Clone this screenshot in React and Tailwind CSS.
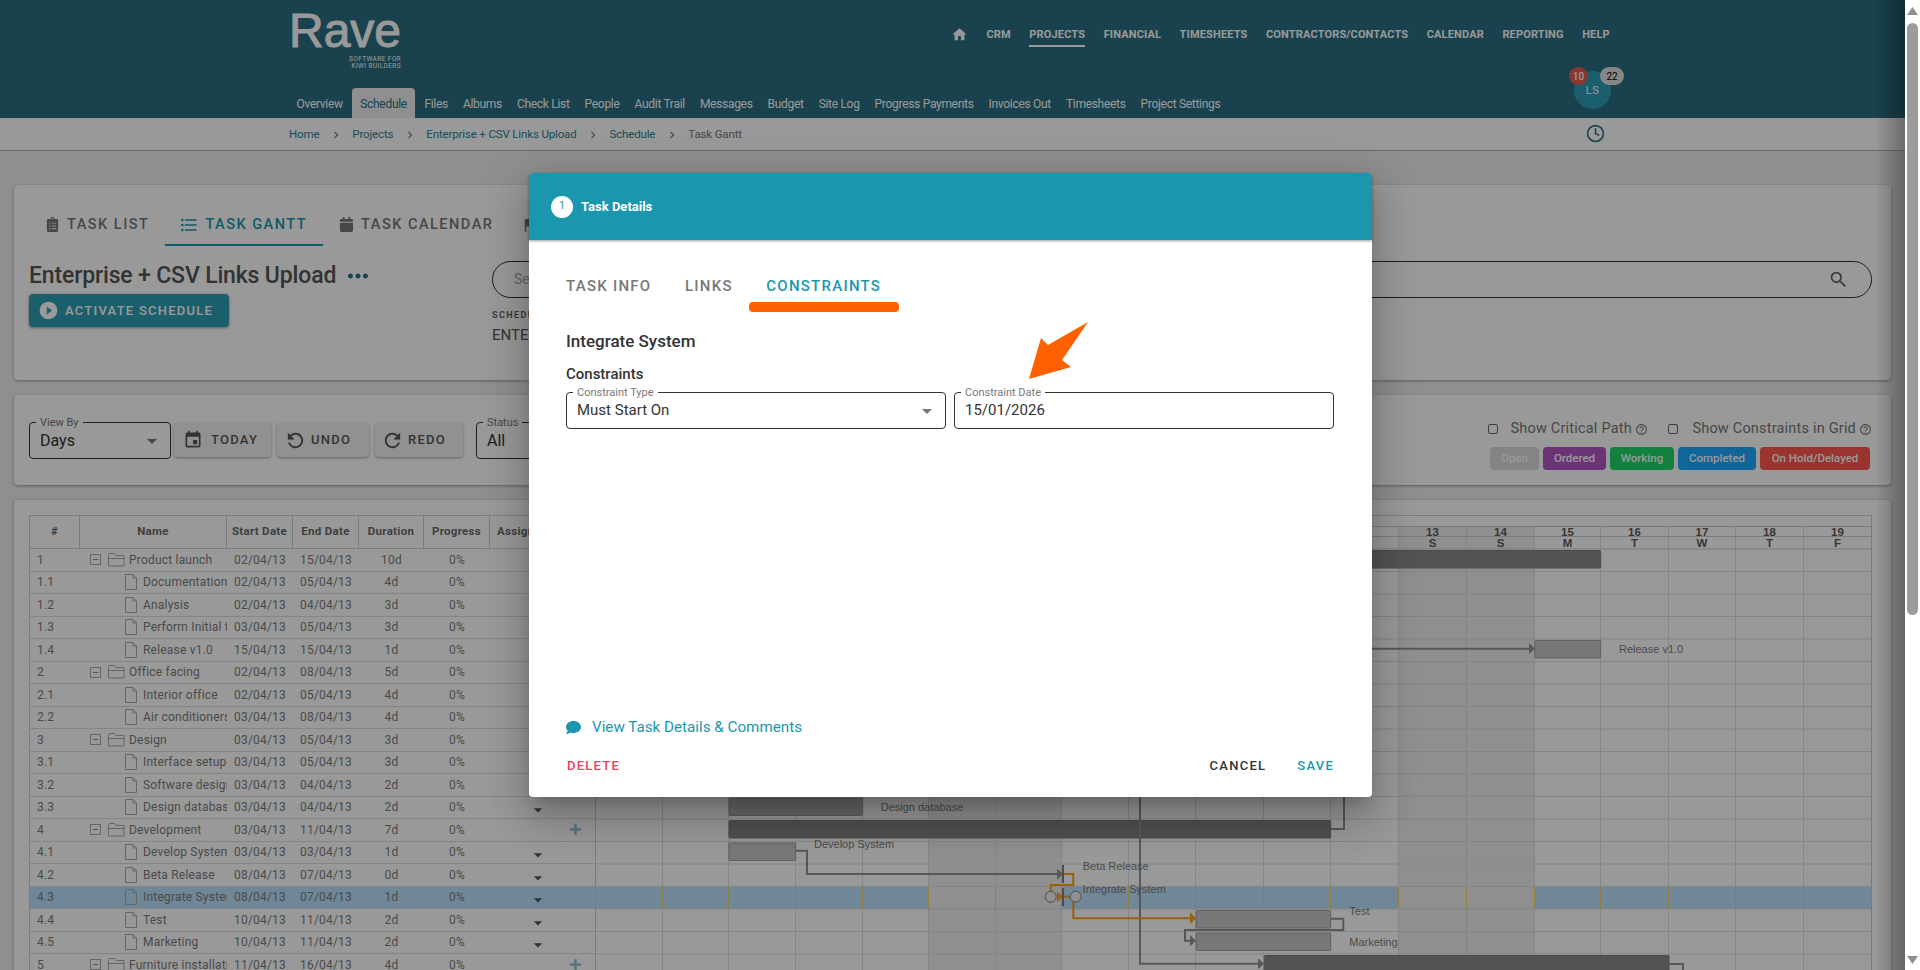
import { MdHome, MdFormatListBulleted, MdEvent, MdPlayCircleFilled, MdSearch, MdHelpOutline, MdMoreHoriz, MdFlag, MdArrowDropDown, MdRefresh, MdChevronRight } from "react-icons/md";
import { FaClipboardList, FaCalendar, FaComment, FaPlus } from "react-icons/fa";
import { FiClock } from "react-icons/fi";

const topNav = ["CRM", "PROJECTS", "FINANCIAL", "TIMESHEETS", "CONTRACTORS/CONTACTS", "CALENDAR", "REPORTING", "HELP"];
const subNav = ["Overview", "Schedule", "Files", "Albums", "Check List", "People", "Audit Trail", "Messages", "Budget", "Site Log", "Progress Payments", "Invoices Out", "Timesheets", "Project Settings"];

const rows = [
  ["1", "Product launch", "02/04/13", "15/04/13", "10d", true],
  ["1.1", "Documentation creation", "02/04/13", "05/04/13", "4d"],
  ["1.2", "Analysis", "02/04/13", "04/04/13", "3d"],
  ["1.3", "Perform Initial testing", "03/04/13", "05/04/13", "3d"],
  ["1.4", "Release v1.0", "15/04/13", "15/04/13", "1d"],
  ["2", "Office facing", "02/04/13", "08/04/13", "5d", true],
  ["2.1", "Interior office", "02/04/13", "05/04/13", "4d"],
  ["2.2", "Air conditioners check", "03/04/13", "08/04/13", "4d"],
  ["3", "Design", "03/04/13", "05/04/13", "3d", true],
  ["3.1", "Interface setup", "03/04/13", "05/04/13", "3d"],
  ["3.2", "Software design", "03/04/13", "04/04/13", "2d"],
  ["3.3", "Design database", "03/04/13", "04/04/13", "2d"],
  ["4", "Development", "03/04/13", "11/04/13", "7d", true],
  ["4.1", "Develop System", "03/04/13", "03/04/13", "1d"],
  ["4.2", "Beta Release", "08/04/13", "07/04/13", "0d"],
  ["4.3", "Integrate System", "08/04/13", "07/04/13", "1d"],
  ["4.4", "Test", "10/04/13", "11/04/13", "2d"],
  ["4.5", "Marketing", "10/04/13", "11/04/13", "2d"],
  ["5", "Furniture installation", "11/04/13", "16/04/13", "4d", true],
];

const HL = 15;
const ROW = 22.5;
const days = ["M", "T", "W", "T", "F", "S", "S"];
// column edges of the timeline, they are not quite even
const edges = [-0.5, 66.5, 132.5, 199.5, 266.5, 332.5, 399.5, 465.5, 532.5, 599.5, 667.5, 734.5, 802.5, 870.5, 938.5, 1004.5, 1072.5, 1139.5, 1207.5, 1275.5];

function GanttChart() {
  const top = 33;
  const rowY = (i) => top + i * ROW;
  const bar = (i, a, b, fill, stroke) => (
    <rect x={a} y={rowY(i) + 1.5} width={b - a} height={17.5} rx="1" fill={fill} stroke={stroke} />
  );
  const link = "#939393";
  const orange = "#ffa01a";
  return (
    <svg width="1277" height="460" className="block font-['Liberation_Sans',Arial,sans-serif]">
      <rect x="0" y={rowY(HL)} width="1277" height={ROW} fill="#b9e1fa" />
      <rect x={edges[5]} y="10.500" width={edges[7] - edges[5]} height="450" fill="#eeeeee" />
      <rect x={edges[12]} y="10.500" width={edges[14] - edges[12]} height="450" fill="#eeeeee" />
      {edges.map((x) => (
        <line key={x} x1={x} x2={x} y1="10.500" y2="460" stroke="#dedede" />
      ))}
      {edges.map((x) => (
        <line key={x} x1={x} x2={x} y1={rowY(HL)} y2={rowY(HL + 1)} stroke="#efd766" />
      ))}
      {rows.map((r, i) => (
        <line key={r[0]} x1="0" x2="1276" y1={rowY(i + 1)} y2={rowY(i + 1)} stroke="#dedede" />
      ))}
      <line x1="0" x2="1276" y1="10.500" y2="10.500" stroke="#cecece" />
      <line x1="0" x2="1276" y1="20.500" y2="20.500" stroke="#cecece" />
      <line x1="0" x2="1276" y1="33" y2="33" stroke="#cecece" />
      {edges.slice(0, 19).map((x, c) => (
        <g key={x} fontSize="11.5" fontWeight="700" fill="#5c5c5c" textAnchor="middle">
          <text x={(x + edges[c + 1]) / 2} y="20">{c + 1}</text>
          <text x={(x + edges[c + 1]) / 2} y="30.500">{days[c % 7]}</text>
        </g>
      ))}
      <line x1="1275.5" x2="1275.5" y1="0" y2="460" stroke="#cecece" />

      {/* bars */}
      {bar(0, 500, 1004.7, "#8a8a8a", "#808080")}
      {bar(4, 939, 1004.7, "#c8c8c8", "#a0a0a0")}
      {bar(11, 133, 266.7, "#adadad", "#9a9a9a")}
      {bar(12, 133, 734.7, "#868686", "#808080")}
      {bar(13, 133, 199.7, "#c8c8c8", "#a0a0a0")}
      {bar(16, 600.3, 734.7, "#c8c8c8", "#a0a0a0")}
      {bar(17, 600.3, 734.7, "#c8c8c8", "#a0a0a0")}
      {bar(18, 668.3, 1073, "#8a8a8a", "#808080")}

      {/* links */}
      <g fill="none" stroke={link} strokeWidth="2">
        <path d="M500 132.700H933" />
        <path d="M200 334.700H211V358H461" />
        <path d="M544 230V447.700H662" />
        <path d="M734.700 313H748V270" />
        <path d="M734.700 402.700H747.300V414H589V424.700H595" />
        <path d="M1073 448H1087V460" />
      </g>
      <g fill={link}>
        <path d="M939 132.700l-6 -5.500v11z" />
        <path d="M467 358l-6 -5.500v11z" />
        <path d="M668 447.700l-6 -5.500v11z" />
        <path d="M600 424.700l-6 -5.500v11z" />
      </g>
      <g fill="none" stroke={orange} strokeWidth="2">
        <path d="M467 358H477.300V369H454.700V375" />
        <path d="M467 380.700H474" />
        <path d="M477.300 386V402.300H594" />
      </g>
      <g fill={orange}>
        <path d="M467 380.700l-6 -5.500v11z" />
        <path d="M600 402.300l-6 -6v12z" />
      </g>
      <path d="M467 349V367M467 372V390" stroke="#808080" strokeWidth="2" />
      <circle cx="454.700" cy="380.700" r="5.500" fill="#f0f0f0" stroke="#808080" />
      <circle cx="479.700" cy="380.700" r="5.500" fill="#f0f0f0" stroke="#808080" />

      <g fontSize="11" fill="#7e7e7e">
        <text x="1023" y="136.700">Release v1.0</text>
        <text x="284.700" y="294.700">Design database</text>
        <text x="218" y="331.700">Develop System</text>
        <text x="486.700" y="353.700">Beta Release</text>
        <text x="486.700" y="376.700">Integrate System</text>
        <text x="753.300" y="398.700">Test</text>
        <text x="753.300" y="429.700">Marketing</text>
      </g>
    </svg>
  );
}

function OutlineField({ label, value, caret, valueClass = "text-[15px]", className }) {
  return (
    <div className={`relative h-[37px] border border-[#333] rounded flex items-center px-[10px] bg-white ${className}`}>
      <span className="absolute -top-[5px] left-[6px] bg-white px-[4px] text-[11px] leading-[10px] text-[#777]">{label}</span>
      <span className={`${valueClass} text-[#333]`}>{value}</span>
      {caret && <MdArrowDropDown size={24} className="ml-auto -mr-[4px] text-[#777]" />}
    </div>
  );
}

function GreyButton({ icon, label, className }) {
  return (
    <button className={`h-[34px] bg-[#f2f2f2] rounded shadow-[0_1px_3px_rgba(0,0,0,0.35)] flex items-center text-[13px] font-medium tracking-[1.25px] text-[#555] ${className}`}>
      {icon}
      {label}
    </button>
  );
}

function TreeRow({ row, index }) {
  const [id, name, start, end, dur, group] = row;
  return (
    <div className={`flex h-[22.5px] items-center border-b border-[#dedede] text-[12px] tracking-[0.2px] text-[#7c7c7c] ${index === HL ? "bg-[#b9e1fa]" : ""}`}>
      <div className="w-[50px] pl-[7px] shrink-0">{id}</div>
      <div className="w-[147px] shrink-0 flex items-center overflow-hidden whitespace-nowrap">
        {group ? (
          <>
            <svg width="11" height="11" viewBox="0 0 11 11" className="ml-[10px] shrink-0">
              <rect x="0.5" y="0.5" width="10" height="10" fill="none" stroke="#aaa" />
              <path d="M3 5.500h5" stroke="#888" />
            </svg>
            <svg width="17" height="14" viewBox="0 0 17 14" className="ml-[7px] mr-[4px] shrink-0">
              <path d="M.5 13V2.500l1-2h5l1.500 2h8v10.500h-15.500zM.5 5.500h16" fill="none" stroke="#aaa" />
            </svg>
          </>
        ) : (
          <svg width="12" height="16" viewBox="0 0 12 16" className="ml-[45px] mr-[6px] shrink-0">
            <path d="M.5.500h7.500l3.500 3.500v11.500h-11zM8 .5v3.500h3.500" fill="none" stroke="#aaa" />
          </svg>
        )}
        <span>{name}</span>
      </div>
      <div className="w-[66px] shrink-0 text-center">{start}</div>
      <div className="w-[66px] shrink-0 text-center">{end}</div>
      <div className="w-[65px] shrink-0 text-center">{dur}</div>
      <div className="w-[66px] shrink-0 text-center">0%</div>
      <div className="w-[106px] shrink-0 relative flex items-center border-r border-[#cecece] h-full">
        {group ? (
          <FaPlus size={13} className="ml-[79px] text-[#8cc3d2]" />
        ) : (
          <MdArrowDropDown size={20} className="ml-[38px] mt-[6px] text-[#555]" />
        )}
      </div>
    </div>
  );
}

export default function App() {
  return (
    <div className="flex h-[970px] overflow-hidden bg-white font-['Roboto',sans-serif]">
      <div className="relative w-[1905px] shrink-0 overflow-hidden bg-[#eeeeee]">
        {/* top header */}
        <header className="relative h-[118px] bg-[#2a6e82] text-white">
          <div className="flex h-[88px]">
            <div className="ml-[289px] w-[112px] pt-[6px]">
              <div className="text-[48px] leading-[50px] font-['Liberation_Sans',Arial,sans-serif] [-webkit-text-stroke:1px_white]">Rave</div>
              <div className="text-[6.5px] leading-[7px] text-right tracking-[0.4px]">SOFTWARE FOR<br />KIWI BUILDERS</div>
            </div>
            <nav className="ml-[550px] flex items-start gap-[18.5px] pt-[26px] text-[11px] font-bold tracking-[0.15px]">
              <MdHome size={17} />
              {topNav.map((n) => (
                <span key={n} className={`h-[21px] leading-[18px] ${n === "PROJECTS" ? "border-b-2 border-white" : ""}`}>{n}</span>
              ))}
            </nav>
          </div>
          <nav className="flex h-[30px] pl-[289px] text-[12px] tracking-[-0.3px]">
            {subNav.map((n) => (
              <span key={n} className={`leading-[33px] ${n === "Schedule" ? "mx-[2px] px-[8px] bg-[#eeeeee] text-[#2a6e82] rounded-t" : "px-[7.5px]"}`}>{n}</span>
            ))}
          </nav>
          <div className="absolute left-[1574px] top-[71px] w-[37px] h-[38px] pt-[2px] rounded-full bg-[#2f9fb5] flex items-center justify-center text-[11px] tracking-[0.5px]">LS</div>
          <div className="absolute left-[1569px] top-[67px] w-[19px] h-[18px] rounded-full bg-[#e65a52] flex items-center justify-center text-[10px] font-medium">10</div>
          <div className="absolute left-[1600px] top-[67px] w-[24px] h-[18px] rounded-full bg-[#e0e0e0] flex items-center justify-center text-[10px] font-normal text-black">22</div>
        </header>

        {/* breadcrumb */}
        <div className="h-[33px] pt-[1px] flex items-center bg-white border-b border-[#b7b7b7] pl-[289px] text-[11.5px] tracking-[-0.15px] text-[#2a8194]">
          <span>Home</span>
          <MdChevronRight size={14} className="mx-[9.5px] text-[#777]" />
          <span>Projects</span>
          <MdChevronRight size={14} className="mx-[9.5px] text-[#777]" />
          <span>Enterprise + CSV Links Upload</span>
          <MdChevronRight size={14} className="mx-[9.5px] text-[#777]" />
          <span>Schedule</span>
          <MdChevronRight size={14} className="mx-[9.5px] text-[#777]" />
          <span className="text-[#777]">Task Gantt</span>
          <FiClock size={19} className="absolute left-[1586px] top-[124px] text-[#2a6e82]" />
        </div>

        {/* schedule card */}
        <section className="mx-[14px] mt-[34px] h-[195px] bg-white rounded shadow-[0_1px_3px_rgba(0,0,0,0.35)] px-[15px] pt-[20px]">
          <div className="flex h-[41px] text-[14.5px] font-medium tracking-[1.5px] text-[#777]">
            <div className="px-[16px] flex items-center gap-[7px] border-b-2 border-transparent"><FaClipboardList size={15} />TASK LIST</div>
            <div className="px-[16px] flex items-center gap-[6px] text-[#1a97ae] border-b-2 border-[#1a97ae]"><MdFormatListBulleted size={20} className="-ml-[2px]" />TASK GANTT</div>
            <div className="px-[16px] flex items-center gap-[7px] border-b-2 border-transparent"><FaCalendar size={15} />TASK CALENDAR</div>
            <div className="pl-[12px] pr-[16px] flex items-center gap-[7px] border-b-2 border-transparent"><MdFlag size={18} />MILESTONES</div>
          </div>
          <div className="flex mt-[15px]">
            <div className="w-[463px] shrink-0">
              <div className="flex items-center h-[30px]">
                <h1 className="text-[23px] leading-[30px] font-medium tracking-[-0.15px] text-[#555]">Enterprise + CSV Links Upload</h1>
                <MdMoreHoriz size={30} className="ml-[7px] text-[#2a6e82]" />
              </div>
              <button className="mt-[3px] w-[200px] h-[33px] rounded bg-[#2f9fb5] shadow-[0_1px_3px_rgba(0,0,0,0.4)] flex items-center pl-[9px] gap-[6px] text-[13px] font-medium tracking-[1.25px] text-white">
                <MdPlayCircleFilled size={21} />ACTIVATE SCHEDULE
              </button>
            </div>
            <div className="flex-1 mr-[4px]">
              <div className="h-[37px] border border-[#333] rounded-full flex items-center pl-[21px] pr-[22px] text-[14px] text-[#aaa]">
                Search Tasks
                <MdSearch size={21} className="ml-auto text-[#666]" />
              </div>
              <div className="mt-[11px] text-[9px] font-bold tracking-[1.4px] text-[#666]">SCHEDULE NAME</div>
              <div className="mt-[1px] text-[15px] text-[#555]">ENTERPRISE + CSV LINKS UPLOAD</div>
            </div>
          </div>
        </section>

        {/* toolbar card */}
        <section className="mx-[14px] mt-[15px] h-[90px] bg-white rounded shadow-[0_1px_3px_rgba(0,0,0,0.35)] pl-[15px] pr-[21px] flex">
          <div className="flex items-start pt-[27px]">
            <OutlineField label="View By" value="Days" valueClass="text-[16px]" caret className="w-[142px]" />
            <GreyButton icon={<MdEvent size={20} className="mr-[8px]" />} label="TODAY" className="w-[97px] mt-[1px] ml-[3px] pl-[9px]" />
            <GreyButton icon={<MdRefresh size={23} className="-scale-x-100 mr-[4px]" />} label="UNDO" className="w-[92px] mt-[1px] ml-[6px] pl-[7px]" />
            <GreyButton icon={<MdRefresh size={23} className="mr-[4px]" />} label="REDO" className="w-[88px] mt-[1px] ml-[6px] pl-[6px]" />
            <OutlineField label="Status" value="All" valueClass="text-[16px]" caret className="w-[150px] ml-[13px]" />
          </div>
          <div className="ml-auto flex flex-col items-end pt-[24px]">
            <div className="flex items-center h-[20px] text-[14.5px] tracking-[0.2px] text-[#777] -mr-[2px]">
              <span className="w-[10px] h-[10px] border border-[#666] rounded-[2px] mr-[12px]" />
              Show Critical Path
              <MdHelpOutline size={13} className="ml-[3px]" />
              <span className="w-[10px] h-[10px] border border-[#666] rounded-[2px] ml-[20.5px] mr-[14px]" />
              Show Constraints in Grid
              <MdHelpOutline size={13} className="ml-[3px]" />
            </div>
            <div className="flex gap-[4px] mt-[8px] text-[11.5px] font-medium text-white">
              <span className="w-[49px] h-[23px] rounded bg-[#dcdcdc] flex items-center justify-center">Open</span>
              <span className="w-[63px] h-[23px] rounded bg-[#b258c5] flex items-center justify-center">Ordered</span>
              <span className="w-[64px] h-[23px] rounded bg-[#1ed569] flex items-center justify-center">Working</span>
              <span className="w-[78px] h-[23px] rounded bg-[#1ba9ff] flex items-center justify-center">Completed</span>
              <span className="w-[110px] h-[23px] rounded bg-[#ff584e] flex items-center justify-center">On Hold/Delayed</span>
            </div>
          </div>
        </section>

        {/* gantt card */}
        <section className="mx-[14px] mt-[15px] h-[500px] bg-white rounded shadow-[0_1px_3px_rgba(0,0,0,0.35)] px-[15px] pt-[15px]">
          <div className="flex w-[1843px] border-t border-l border-[#cecece]">
            <div className="w-[566px] shrink-0">
              <div className="flex h-[33px] items-center border-b border-[#cecece] text-[11.5px] font-bold tracking-[0.3px] text-[#6a6a6a] [&>div]:h-full [&>div]:flex [&>div]:items-center [&>div]:justify-center [&>div]:border-r [&>div]:border-[#cecece] [&>div]:shrink-0">
                <div className="w-[50px]">#</div>
                <div className="w-[147px]">Name</div>
                <div className="w-[66px]">Start Date</div>
                <div className="w-[66px]">End Date</div>
                <div className="w-[65px]">Duration</div>
                <div className="w-[66px]">Progress</div>
                <div className="w-[106px] !justify-start pl-[7px]">Assigned</div>
              </div>
              {rows.map((r, i) => (
                <TreeRow key={r[0]} row={r} index={i} />
              ))}
            </div>
            <GanttChart />
          </div>
        </section>

        {/* modal overlay */}
        <div className="absolute inset-0 bg-black/40" />
        <div className="absolute top-0 right-0 w-[30px] h-full bg-gradient-to-r from-transparent to-black/30" />
        <div className="absolute left-[529px] top-[173px] w-[843px] h-[624px] bg-white rounded flex flex-col shadow-[0_11px_15px_-7px_rgba(0,0,0,0.2),0_24px_38px_3px_rgba(0,0,0,0.14),0_9px_46px_8px_rgba(0,0,0,0.12)]">
          <div className="h-[67px] shrink-0 bg-[#1a97ae] rounded-t flex items-center pl-[22px] gap-[8px] shadow-[0_1px_3px_rgba(0,0,0,0.4)]">
            <span className="w-[22px] h-[22px] rounded-full bg-white text-[#1a97ae] text-[11px] flex items-center justify-center">1</span>
            <span className="text-[13px] font-bold text-white">Task Details</span>
          </div>
          <div className="flex-1 flex flex-col pl-[37px] pr-[38px] pb-[21px] pt-[36px]">
            <div className="flex gap-[33.5px] h-5 items-center text-[15px] font-medium tracking-[1.25px] text-[#777]">
              <span>TASK INFO</span>
              <span>LINKS</span>
              <span className="text-[#1a97ae]">CONSTRAINTS</span>
            </div>
            <h2 className="mt-[33px] text-[17px] leading-6 font-medium text-[#333]">Integrate System</h2>
            <h3 className="mt-[11px] text-[15px] leading-5 font-medium text-[#333]">Constraints</h3>
            <div className="mt-[8px] flex gap-[8px]">
              <OutlineField label="Constraint Type" value="Must Start On" caret className="flex-1" />
              <OutlineField label="Constraint Date" value="15/01/2026" className="flex-1" />
            </div>
            <div className="mt-auto h-5 flex items-center gap-[11px] text-[15.2px] text-[#1a97ae]">
              <FaComment size={15} />
              View Task Details &amp; Comments
            </div>
            <div className="mt-[19px] h-5 pl-[1px] flex items-center text-[13px] font-medium tracking-[1.25px]">
              <span className="text-[#f0405a]">DELETE</span>
              <span className="ml-auto text-[#333]">CANCEL</span>
              <span className="ml-[31px] text-[#1a97ae]">SAVE</span>
            </div>
          </div>
          {/* annotation */}
          <div className="absolute left-[220px] top-[129px] w-[150px] h-[10px] rounded bg-[#ff6000]" />
          <svg width="70" height="70" viewBox="0 0 70 70" className="absolute left-[495px] top-[147px]">
            <path d="M64 2L24 25L17 18L5 59L47 47L38 40Z" fill="#ff6000" />
          </svg>
        </div>
      </div>

      {/* page scrollbar */}
      <div className="w-[15px] shrink-0 bg-white flex flex-col items-center relative">
        <svg width="11" height="8" viewBox="0 0 11 8" className="mt-[7px]"><path d="M5.500 0L11 8H0z" fill="#8f8f8f" /></svg>
        <div className="mt-[8px] w-[11px] h-[592px] rounded-full bg-[#9c9c9c]" />
        <svg width="11" height="8" viewBox="0 0 11 8" className="mt-auto mb-[6px]"><path d="M0 0H11L5.500 8z" fill="#8f8f8f" /></svg>
      </div>
    </div>
  );
}
